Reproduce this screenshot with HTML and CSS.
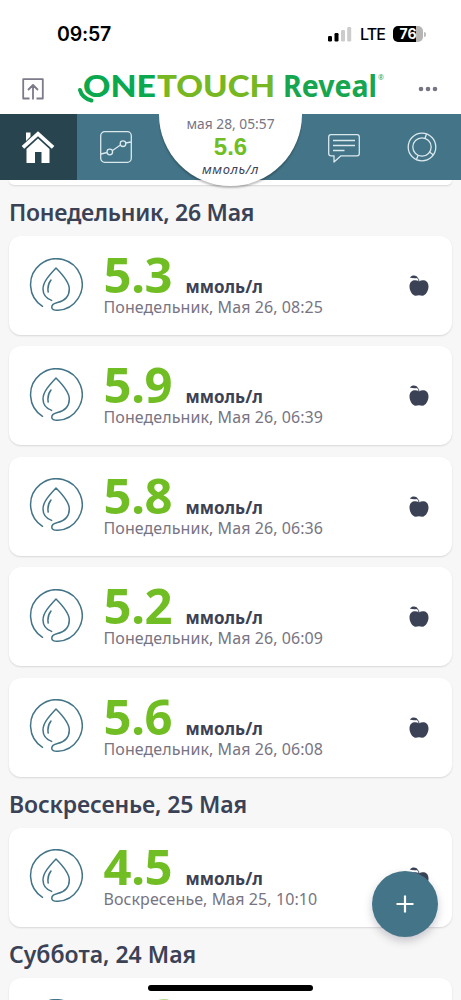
FILE: index.html
```html
<!DOCTYPE html>
<html lang="ru">
<head>
<meta charset="utf-8">
<title>OneTouch Reveal</title>
<link rel="stylesheet" href="styles.css">
</head>
<body>
<svg width="0" height="0" class="defs">
  <symbol id="drop" viewBox="0 0 54 54"><path d="M13.500 48.300A25.800 25.800 0 1 1 29 52.300C20.500 53 21 46.300 28.500 44.600C35 43 40.300 39 40.300 31C40.300 25 34.500 17.500 27 10C20 17.500 14 24 14 31C14 36.500 17.500 40.500 22.600 42.400M22 22Q18 27 19.200 34" /></symbol>
  <symbol id="apple" viewBox="0 0 22 24"><path d="M11 7.500C14.500 5 20.500 6 20.500 12.500C20.500 17 17.500 21.500 14.500 21.700Q12.500 21.200 11 21.200Q9.500 21.200 7.500 21.700C4.500 21.500 1.500 17 1.500 12.500C1.500 6 7.500 5 11 7.500ZM1.800 3.500C4 .600 8.500 .900 9.800 3.800C7.500 4.600 4 4.400 1.800 3.500Z"/><path class="stem" d="M11 8Q11.200 5 9 3.500"/></symbol>
</svg>
<div class="app">
  <div class="status">
    <span class="clock">09:57</span>
    <svg class="signal" width="24" height="16" viewBox="0 0 24 16"><rect x="0" y="9" width="4" height="5.500" rx="1.200"/><rect x="6.500" y="6" width="4" height="8.500" rx="1.200"/><g fill="#ccc"><rect x="13" y="3" width="4" height="11.500" rx="1.200"/><rect x="19.200" y="0" width="4" height="14.500" rx="1.200"/></g></svg>
    <span class="lte">LTE</span>
    <span class="battery"><span>76</span></span><i class="nub"></i>
  </div>
  <header class="brand">
    <svg class="share" width="22" height="22" viewBox="0 0 22 22"><path d="M7.500 20.500H1.200V1.200H20.800V20.500H14.500M11 21.500V7M6 12L11 7L16 12"/></svg>
    <svg class="logo" width="310" height="44" viewBox="0 0 310 44">
      <path class="swoosh" d="M3 22Q5 30 14.500 32.500"/>
      <text class="one" x="6" y="28.500" textLength="73" lengthAdjust="spacingAndGlyphs">ONE</text>
      <text class="touch" x="80" y="28.500" textLength="118" lengthAdjust="spacingAndGlyphs">TOUCH</text>
      <text class="reveal" x="206" y="28.500" textLength="94" lengthAdjust="spacingAndGlyphs">Reveal</text>
      <text class="reg" x="301" y="12">®</text>
    </svg>
    <svg class="more" width="20" height="6" viewBox="0 0 20 6"><circle cx="3" cy="3" r="2.300"/><circle cx="10" cy="3" r="2.300"/><circle cx="17" cy="3" r="2.300"/></svg>
  </header>
  <nav class="tabs">
    <a class="tab home"><svg width="34" height="34" viewBox="0 0 34 34"><path fill="#fff" d="M5 2.500H9.500V6.500L5 11ZM17 1.200L33.300 16L30.800 18.700L17 6.200L3.200 18.700L.700 16ZM17 8.500L28.500 19V33H20.500V22H14V33H5.500V19Z"/></svg></a>
    <a class="tab"><svg width="34" height="34" viewBox="0 0 34 34"><rect x="1.700" y="1.700" width="30.600" height="30.600" rx="4"/><path d="M2 24L8 22.500M13.500 20.500L21.500 15M26.500 13L32 12"/><circle cx="10.800" cy="22" r="2.800"/><circle cx="24" cy="13.700" r="2.800"/></svg></a>
    <div class="latest"><div class="when">мая 28, 05:57</div><div class="now">5.6</div><div class="nowunit">ммоль/л</div></div>
    <a class="tab chat"><svg width="34" height="32" viewBox="0 0 34 32"><path d="M4 1.700H30Q32.300 1.700 32.300 4V20.500Q32.300 22.800 30 22.800H14L7 29V22.800H4Q1.700 22.800 1.700 20.500V4Q1.700 1.700 4 1.700ZM6 7.500H28M6 12.500H28M6 17.500H17.500"/></svg></a>
    <a class="tab ring"><svg width="30" height="30" viewBox="0 0 30 30"><circle cx="15" cy="15" r="13.800"/><circle cx="15" cy="15" r="9.200"/><path d="M18 6.300L19.500 2M22.500 20L26.500 23M11 23.500L9.500 27.500"/></svg></a>
  </nav>
  <main class="list">
    <div class="card tail"></div>
    <h2>Понедельник, 26 Мая</h2>
    <section>
      <article class="card"><svg class="drop"><use href="#drop"/></svg><div class="info"><div class="value"><b>5.3</b><span>ммоль/л</span></div><time>Понедельник, Мая 26, 08:25</time></div><svg class="apple"><use href="#apple"/></svg></article>
      <article class="card"><svg class="drop"><use href="#drop"/></svg><div class="info"><div class="value"><b>5.9</b><span>ммоль/л</span></div><time>Понедельник, Мая 26, 06:39</time></div><svg class="apple"><use href="#apple"/></svg></article>
      <article class="card"><svg class="drop"><use href="#drop"/></svg><div class="info"><div class="value"><b>5.8</b><span>ммоль/л</span></div><time>Понедельник, Мая 26, 06:36</time></div><svg class="apple"><use href="#apple"/></svg></article>
      <article class="card"><svg class="drop"><use href="#drop"/></svg><div class="info"><div class="value"><b>5.2</b><span>ммоль/л</span></div><time>Понедельник, Мая 26, 06:09</time></div><svg class="apple"><use href="#apple"/></svg></article>
      <article class="card"><svg class="drop"><use href="#drop"/></svg><div class="info"><div class="value"><b>5.6</b><span>ммоль/л</span></div><time>Понедельник, Мая 26, 06:08</time></div><svg class="apple"><use href="#apple"/></svg></article>
    </section>
    <h2 class="sun">Воскресенье, 25 Мая</h2>
    <section>
      <article class="card"><svg class="drop"><use href="#drop"/></svg><div class="info"><div class="value"><b>4.5</b><span>ммоль/л</span></div><time>Воскресенье, Мая 25, 10:10</time></div><svg class="apple"><use href="#apple"/></svg></article>
    </section>
    <h2 class="sat">Суббота, 24 Мая</h2>
    <section>
      <article class="card"><svg class="drop"><use href="#drop"/></svg><div class="info"><div class="value"><b>5.6</b></div></div></article>
    </section>
  </main>
  <button class="add" aria-label="Добавить"><svg width="18" height="18" viewBox="0 0 18 18"><path d="M9 .500V17.500M.500 9H17.500"/></svg></button>
  <div class="homebar"></div>
</div>
</body>
</html>
```
FILE: styles.css
```css
* { box-sizing: border-box; }
body { margin: 0; font-family: "Noto Sans", sans-serif; color: #3b4256; background: #fff; }
.defs { position: absolute; }
svg { fill: none; flex: none; }
.app { position: relative; width: 461px; height: 1000px; overflow: hidden; display: flex; flex-direction: column; }

.status { height: 68px; display: flex; align-items: center; padding-left: 57px; font-family: Inter, sans-serif; color: #000; flex: none; }
.clock { font-size: 19.5px; font-weight: 600; width: 271px; letter-spacing: -.2px; }
.signal { fill: #000; margin-top: 1px; }
.lte { font-size: 16px; font-weight: 500; margin-left: 8px; width: 33px; letter-spacing: -.9px; }
.battery { width: 30px; height: 16px; border-radius: 5px; background: linear-gradient(90deg, #000 76%, #b5b5b5 76%); color: #fff; font-size: 14px; font-weight: 700; line-height: 16px; text-align: center; }
.nub { width: 2px; height: 5px; background: #bbb; border-radius: 0 2px 2px 0; margin-left: 1px; }

.brand { height: 46px; display: flex; flex: none; padding-left: 22px; }
.share { margin-top: 10px; stroke: #7d7a89; stroke-width: 1.8; stroke-linejoin: round; }
.logo { margin-left: 33px; overflow: visible; }
.more { fill: #777483; margin: 18px 0 0 31px; }
.swoosh { stroke: #0aa84f; stroke-width: 4; stroke-linecap: round; }
.logo text { font-weight: 700; font-size: 31px; }
.logo .one { font-family: Lato, sans-serif; font-weight: 900; fill: #0aa84f; }
.logo .touch { font-family: Lato, sans-serif; font-weight: 900; fill: #77b722; }
.logo .reveal { fill: #16a64f; }
.logo .reg { font-size: 7px; font-weight: 400; fill: #16a64f; }

.tabs { position: relative; z-index: 2; height: 66px; flex: none; background: #437487; display: grid; grid-template-columns: 77px 77px 153px 77px 77px; grid-template-rows: 66px; }
.tab { display: flex; align-items: center; justify-content: center; }
.tab svg { stroke: #dbe9ee; stroke-width: 1.3; stroke-linejoin: round; }
.home { background: #28454f; }
.home svg { stroke: none; margin-right: 1px; }
.chat svg { margin: 4px 3px 0 0; }
.ring svg { margin-right: 2px; }
.latest { width: 143px; height: 72px; margin-left: 5px; background: #fff; border-radius: 0 0 72px 72px; box-shadow: 0 2px 2px rgba(0,0,0,.25); clip-path: inset(0 0 -8px 0); text-align: center; white-space: nowrap; }
.when { font-size: 13.8px; line-height: 20px; color: #777483; }
.now { font-family: "Liberation Sans", sans-serif; font-weight: 700; font-size: 24px; line-height: 26px; color: #6fbe25; }
.nowunit { font-size: 13px; font-style: italic; line-height: 18px; letter-spacing: .6px; }

.list { flex: 1; background: #f7f7f7; padding: 0 9px; min-height: 0; overflow: hidden; }
.card { height: 99px; background: #fff; border-radius: 12px; box-shadow: 0 1px 2px rgba(0,0,0,.13); display: flex; padding-left: 20px; }
.tail { height: 5px; border-radius: 0 0 12px 12px; }
h2 { margin: 0; height: 51px; line-height: 54px; font-size: 23px; font-weight: 600; letter-spacing: -.25px; white-space: nowrap; }
.sun { letter-spacing: -.15px; }
.sat { letter-spacing: 0; }
section { display: flex; flex-direction: column; gap: 11.4px; }
.drop { width: 54px; height: 54px; margin-top: 21.500px; stroke: #437487; stroke-width: 1.5; stroke-linecap: round; stroke-linejoin: round; }
.info { margin-left: 20.500px; width: 295.500px; white-space: nowrap; }
.value { height: 60px; display: flex; align-items: baseline; line-height: 76px; }
.value b { font-size: 49px; font-weight: 700; color: #70bd24; width: 82px; letter-spacing: -.4px; }
.value span { font-size: 17px; font-weight: 700; }
time { display: block; font-size: 16px; line-height: 22px; letter-spacing: .08px; color: #777483; }
.apple { width: 22px; height: 24px; margin-top: 38px; margin-left: 9px; fill: #3b4256; }
.stem { fill: none; stroke: #3b4256; stroke-width: 1; }

.add { position: absolute; z-index: 3; left: 372px; top: 871px; width: 66px; height: 66px; border: 0; border-radius: 50%; background: #437487; box-shadow: 0 4px 8px rgba(50,50,80,.25); display: flex; align-items: center; justify-content: center; padding: 0; }
.add svg { stroke: #fff; stroke-width: 2.2; }
.homebar { position: absolute; z-index: 4; left: 148px; top: 985px; width: 165px; height: 6px; border-radius: 3px; background: #000; }
```
